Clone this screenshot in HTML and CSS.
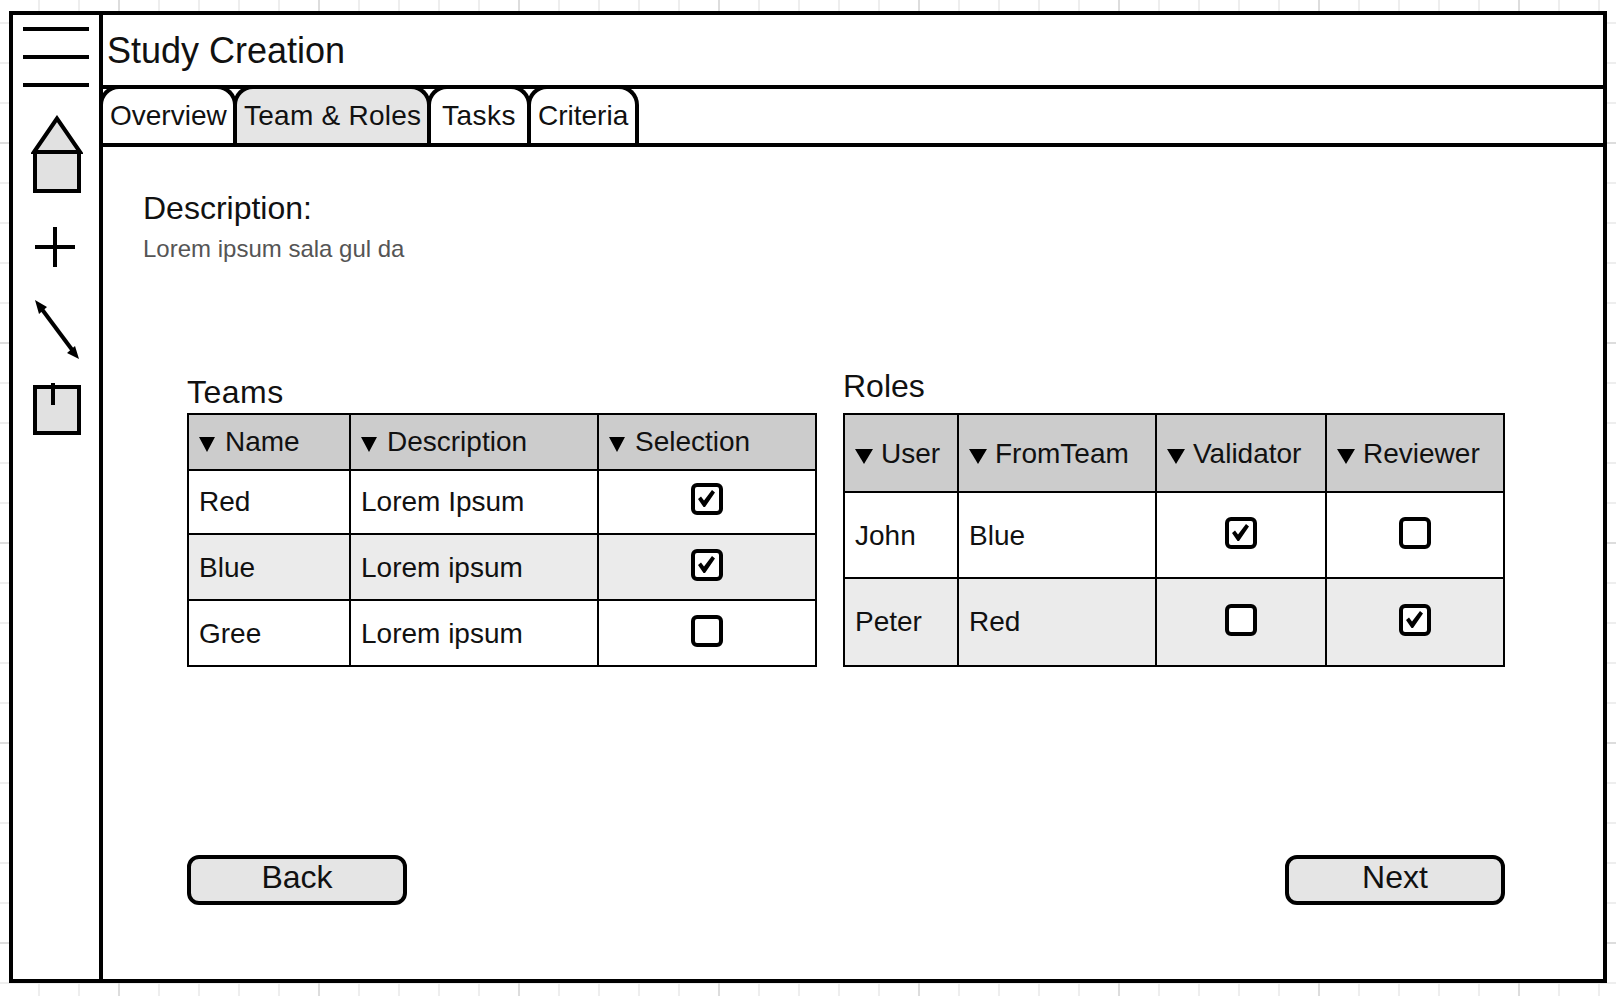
FILE: index.html
```html
<!DOCTYPE html>
<html lang="en">
<head>
  <meta charset="UTF-8">
  <meta name="viewport" content="width=device-width, initial-scale=1.0">
  <title>Study Creation</title>
  <link rel="stylesheet" href="styles.css">
</head>
<body>
  <div class="frame">
    <nav class="sidebar">
      <div class="menu-icon"><span></span><span></span><span></span></div>
      <svg class="icon icon-home" width="52" height="78" viewBox="0 0 52 78">
        <path d="M26 3.5 L3 37 H49 Z" fill="#e1e1e1" stroke="#000" stroke-width="4"/>
        <rect x="4" y="37" width="44" height="39" fill="#e1e1e1" stroke="#000" stroke-width="4"/>
      </svg>
      <svg class="icon icon-plus" width="40" height="40" viewBox="0 0 40 40">
        <path d="M0 20 H40 M20 0 V40" stroke="#000" stroke-width="4" fill="none"/>
      </svg>
      <svg class="icon icon-arrow" width="46" height="60" viewBox="0 0 46 60">
        <path d="M7 8 L39 51" stroke="#000" stroke-width="4" fill="none"/>
        <path d="M1 0 L13 7 L5 14 Z M45 59 L33 53 L41 46 Z" fill="#000"/>
      </svg>
      <svg class="icon icon-box" width="52" height="54" viewBox="0 0 52 54">
        <rect x="4" y="4" width="44" height="46" fill="#e1e1e1" stroke="#000" stroke-width="4"/>
        <path d="M22 0 V22" stroke="#000" stroke-width="4" fill="none"/>
      </svg>
    </nav>

    <main class="main">
      <header class="header">Study Creation</header>

      <div class="tabs">
        <div class="tab">Overview</div>
        <div class="tab tab-active">Team &amp; Roles</div>
        <div class="tab">Tasks</div>
        <div class="tab">Criteria</div>
      </div>

      <section class="content">
        <h3 class="desc-title">Description:</h3>
        <p class="desc-text">Lorem ipsum sala gul da</p>

        <div class="tables">
          <div class="teams">
            <h3 class="table-title">Teams</h3>
            <table>
              <colgroup>
                <col class="w-162"><col class="w-248"><col class="w-218">
              </colgroup>
              <tr class="head-teams">
                <th><span class="sort"></span>Name</th>
                <th><span class="sort"></span>Description</th>
                <th><span class="sort"></span>Selection</th>
              </tr>
              <tr class="row-a">
                <td>Red</td><td>Lorem Ipsum</td>
                <td class="check-cell"><span class="check on"></span></td>
              </tr>
              <tr class="row-b grey">
                <td>Blue</td><td>Lorem ipsum</td>
                <td class="check-cell"><span class="check on"></span></td>
              </tr>
              <tr class="row-b">
                <td>Gree</td><td>Lorem ipsum</td>
                <td class="check-cell"><span class="check"></span></td>
              </tr>
            </table>
          </div>

          <div class="roles">
            <h3 class="table-title">Roles</h3>
            <table>
              <colgroup>
                <col class="w-114"><col class="w-198"><col class="w-170"><col class="w-178">
              </colgroup>
              <tr class="head-roles">
                <th><span class="sort"></span>User</th>
                <th><span class="sort"></span>FromTeam</th>
                <th><span class="sort"></span>Validator</th>
                <th><span class="sort"></span>Reviewer</th>
              </tr>
              <tr class="row-c">
                <td>John</td><td>Blue</td>
                <td class="check-cell"><span class="check on"></span></td>
                <td class="check-cell"><span class="check"></span></td>
              </tr>
              <tr class="row-d grey">
                <td>Peter</td><td>Red</td>
                <td class="check-cell"><span class="check"></span></td>
                <td class="check-cell"><span class="check on"></span></td>
              </tr>
            </table>
          </div>
        </div>

        <div class="actions">
          <button type="button">Back</button>
          <button type="button">Next</button>
        </div>
      </section>
    </main>
  </div>
</body>
</html>
```
FILE: styles.css
```css
html {
  height: 100%;
  background-color: #fff;
  background-image:
    linear-gradient(to right, #ddd 2px, transparent 2px),
    linear-gradient(to bottom, #ddd 2px, transparent 2px),
    linear-gradient(to right, #eee 2px, transparent 2px),
    linear-gradient(to bottom, #eee 2px, transparent 2px);
  background-size: 200px 200px, 200px 200px, 40px 40px, 40px 40px;
  background-position: 118px 0, 0 142px, 38px 0, 0 22px;
}
body {
  margin: 11px 9px 0;
  font-family: "Liberation Sans", Arial, sans-serif;
  color: #111;
}
.frame {
  display: flex;
  width: 1598px;
  height: 972px;
  box-sizing: border-box;
  border: 4px solid #000;
  background: #fff;
}

/* sidebar */
.sidebar {
  flex: none;
  width: 90px;
  box-sizing: border-box;
  border-right: 4px solid #000;
  overflow: hidden;
}
.menu-icon {
  display: flex;
  flex-direction: column;
  gap: 24px;
  margin: 12px 0 0 10px;
  width: 66px;
}
.menu-icon span {
  display: block;
  height: 4px;
  background: #000;
}
.icon {
  display: block;
}
.icon-home {
  margin: 28px 0 0 18px;
}
.icon-plus {
  margin: 34px 0 0 22px;
}
.icon-arrow {
  margin: 33px 0 0 21px;
}
.icon-box {
  margin: 23px 0 0 18px;
}

/* header + tabs */
.main {
  flex: 1;
  min-width: 0;
}
.header {
  height: 74px;
  box-sizing: border-box;
  border-bottom: 4px solid #000;
  padding-left: 4px;
  font-size: 36px;
  line-height: 72px;
}
.tabs {
  display: flex;
  height: 62px;
  box-sizing: border-box;
  margin-top: -4px;
  border-bottom: 4px solid #000;
}
.tab {
  height: 58px;
  box-sizing: border-box;
  margin-left: -4px;
  padding: 0 0 0 7px;
  border: 4px solid #000;
  border-bottom: 0;
  border-radius: 20px 20px 0 0;
  background: #fff;
  font-size: 28px;
  line-height: 54px;
  white-space: nowrap;
}
.tab:nth-child(1) { width: 138px; }
.tab:nth-child(2) { width: 198px; letter-spacing: .25px; }
.tab:nth-child(3) { width: 104px; padding-left: 11px; letter-spacing: .5px; }
.tab:nth-child(4) { width: 112px; }
.tab-active {
  background: #e5e5e5;
}

/* content */
.content {
  padding: 41px 0 0 40px;
}
.desc-title {
  margin: 0;
  font-size: 32px;
  font-weight: normal;
  line-height: 40px;
}
.desc-text {
  margin: 5px 0 0;
  font-size: 24px;
  line-height: 32px;
  color: #555;
}
.tables {
  display: flex;
  gap: 26px;
  margin: 102px 0 0 44px;
  height: 302px;
}
.table-title {
  height: 46px;
  box-sizing: border-box;
  margin: 0;
  font-size: 32px;
  font-weight: normal;
  line-height: 38px;
}
.teams .table-title {
  padding-top: 6px;
  letter-spacing: .5px;
}
table {
  table-layout: fixed;
  border-collapse: collapse;
  border: 2px solid #000;
  font-size: 28px;
}
.teams table { width: 630px; }
.roles table { width: 660px; }
.w-162 { width: 162px; }
.w-248 { width: 248px; }
.w-218 { width: 218px; }
.w-114 { width: 114px; }
.w-198 { width: 198px; }
.w-170 { width: 170px; }
.w-178 { width: 178px; }
th, td {
  border: 2px solid #000;
  padding: 0 0 0 10px;
  text-align: left;
  font-weight: normal;
  white-space: nowrap;
}
th {
  background: #ccc;
}
.sort {
  display: inline-block;
  margin: 0 10px -1px 0;
  border-style: solid;
  border-color: #000 transparent transparent;
  border-width: 15px 8px 0;
}
.roles .sort {
  border-width: 15px 9px 0;
  margin-right: 8px;
}
.head-teams { height: 56px; }
.head-roles { height: 78px; }
.head-roles th,
.row-b td:not(.check-cell),
.row-c td:not(.check-cell) {
  padding-top: 2px;
}
.row-a { height: 64px; }
.row-b { height: 66px; }
.row-c { height: 86px; }
.row-d { height: 88px; }
.grey td {
  background: #ebebeb;
}
.check-cell {
  padding: 0;
  text-align: center;
}
.check {
  display: block;
  position: relative;
  top: -2px;
  width: 32px;
  height: 32px;
  box-sizing: border-box;
  margin: 0 auto;
  border: 4px solid #000;
  border-radius: 6px;
  background: #fff;
}
.row-a .check {
  top: -3px;
}
.check.on::after {
  content: "";
  position: absolute;
  inset: 0;
  background: #000;
  clip-path: polygon(3px 12px, 6px 9.5px, 9px 13.5px, 17px 3px, 20px 5.5px, 10px 20px, 8.5px 20px);
}

/* buttons */
.actions {
  display: flex;
  justify-content: space-between;
  width: 1318px;
  margin: 186px 0 0 44px;
}
button {
  width: 220px;
  height: 50px;
  box-sizing: border-box;
  padding: 0 0 6px;
  border: 4px solid #000;
  border-radius: 12px;
  background: #e5e5e5;
  color: #111;
  font-family: inherit;
  font-size: 32px;
}
```
